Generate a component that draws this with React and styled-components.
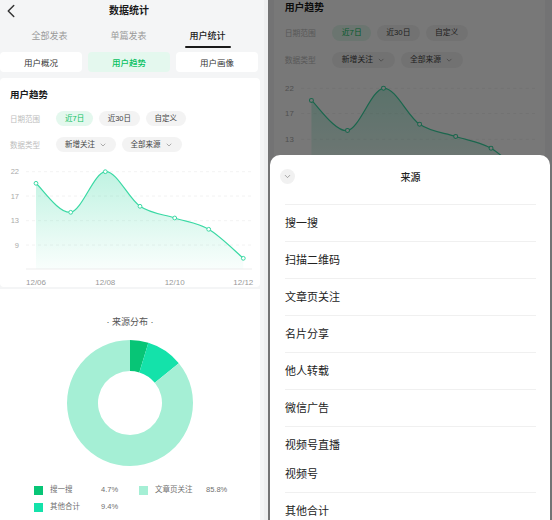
import styled, { createGlobalStyle } from 'styled-components'
import { ChevronLeft, ChevronDown } from 'lucide-react'

const GREEN = '#07c160'
const LINE = '#3ad9a4'

const GlobalStyle = createGlobalStyle`
  * { box-sizing: border-box; margin: 0; padding: 0; }
  body {
    margin: 0;
    font-family: "Liberation Sans", "Noto Sans CJK SC", sans-serif;
    background: #f4f5f6;
  }
`

const Canvas = styled.div`
  display: flex; width: 552px; height: 520px; overflow: hidden; background: #f4f5f6;
`
const LeftScreen = styled.div`width: 262px; flex: none; height: 100%; overflow: hidden;`
const Gap = styled.div`width: 6px; flex: none; border-left: 2px solid #f4f5f6; background: #eeeff0;`
const RightScreen = styled.div`position: relative; flex: 1; overflow: hidden; background: #f4f5f6;`
/* the page behind the sheet, scrolled down to the trend card */
const Scrolled = styled.div`zoom: 1.04; width: 262px; height: 166px; overflow: hidden; margin: -15px 0 0 6px;`

const Page = styled.div`width: 262px; background: #f4f5f6; color: #1a1a1a;`

const Header = styled.div`
  display: grid; grid-template-columns: 22px 1fr 26px; align-items: center; height: 22px;
  svg { display: block; color: #333; }
`
const Title = styled.h1`font-size: 10px; font-weight: 700; text-align: center; line-height: 12px;`

const Tabs = styled.div`display: grid; grid-template-columns: repeat(3, 79px); padding-left: 10px;`
const Tab = styled.div`
  display: flex; flex-direction: column; align-items: center; height: 26px; padding-top: 8px;
  font-size: 9px; line-height: 12px;
  color: ${({ $active }) => ($active ? '#1a1a1a' : '#9a9a9a')};
  font-weight: ${({ $active }) => ($active ? 500 : 400)};
  &::after {
    content: ''; width: 46px; height: 1.5px; margin-top: 4px; border-radius: 1px;
    background: ${({ $active }) => ($active ? '#1a1a1a' : 'transparent')};
  }
`

const Segments = styled.div`display: grid; grid-template-columns: repeat(3, 82px); gap: 6px; margin-top: 4px;`
const Seg = styled.div`
  height: 20px; display: flex; align-items: center; justify-content: center; border-radius: 4px;
  font-size: 8.5px; font-weight: ${({ $active }) => ($active ? 500 : 400)};
  background: ${({ $active }) => ($active ? '#e4f8ee' : '#fff')};
  color: ${({ $active }) => ($active ? GREEN : '#333')};
`

const Card = styled.div`margin: 6px 2px 0 0; background: #fff; border-radius: 4px;`
const CardHead = styled.div`padding: 11px 10px 0;`
const CardTitle = styled.h2`font-size: 9.5px; font-weight: 700; line-height: 12px;`
const Filters = styled.div`display: grid; gap: 11px; margin-top: 10px;`
const FilterRow = styled.div`display: flex; align-items: center;`
const FilterLabel = styled.span`width: 46px; flex: none; font-size: 7.5px; color: #bdbdbd;`
const Chips = styled.div`display: flex; gap: 5.5px;`
const Chip = styled.span`
  display: inline-flex; align-items: center; gap: 4px; height: 15px; padding: 0 9px;
  border-radius: 8px; font-size: 7.5px; line-height: 1;
  background: ${({ $active }) => ($active ? '#e4f8ee' : '#f3f3f3')};
  color: ${({ $active }) => ($active ? GREEN : '#444')};
  svg { color: #888; }
`
const Chart = styled.svg`display: block; margin-top: 4px;`

const PieCard = styled.div`margin: 2px 2px 0 0; background: #fff; padding-top: 27px; height: 240px;`
const PieTitle = styled.div`text-align: center; font-size: 9px; line-height: 12px; color: #555;`
const Donut = styled.svg`display: block; margin: 11px auto 0;`
const Legend = styled.div`
  display: grid; grid-template-columns: 105px 105px; row-gap: 5px; margin-top: 17px; padding-left: 34px;
`
const LegendItem = styled.div`display: flex; align-items: center; font-size: 7.5px; line-height: 12px; color: #707070;`
const Swatch = styled.span`width: 9px; height: 9px; flex: none; margin-right: 7px; background: ${({ $c }) => $c};`
const LegendName = styled.span`width: 51px; flex: none;`

const Mask = styled.div`position: absolute; inset: 0; background: rgba(0, 0, 0, 0.53);`
const Sheet = styled.div`
  position: absolute; top: 155px; left: 2px; right: 2px; bottom: 0;
  background: #fff; border-radius: 10px 10px 0 0; padding: 0 14px 0 15px;
`
const SheetHeader = styled.div`display: grid; grid-template-columns: 15px 1fr 15px; align-items: center; height: 42px;`
const CloseBtn = styled.span`
  width: 15px; height: 15px; border-radius: 50%; background: #f1f1f1; margin-left: -5px;
  display: flex; align-items: center; justify-content: center; color: #8a8a8a;
`
const SheetTitle = styled.div`text-align: center; font-size: 10px; font-weight: 500; color: #222;`
const List = styled.div`margin-top: 7px; border-top: 1px solid #f0f0f0;`
const Item = styled.div`
  display: flex; font-size: 11px; line-height: 14px; color: #222;
  height: ${({ $flush }) => ($flush ? 29 : 37)}px;
  align-items: ${({ $flush }) => ($flush ? 'flex-start' : 'center')};
  padding-top: ${({ $flush }) => ($flush ? 11 : 0)}px;
  border-bottom: ${({ $flush }) => ($flush ? 'none' : '1px solid #f0f0f0')};
`

const points = [[36, 27.3], [70.7, 56.3], [105.3, 15.7], [140, 50.3], [174.7, 62], [208.7, 73.3], [243.3, 102.3]]
const yTicks = [['22', 15.7], ['17', 40], ['13', 64.7], ['9', 89]]
const xTicks = [['12/06', 36], ['12/08', 105.3], ['12/10', 174.7], ['12/12', 243.3]]
const AXIS = 113

const smoothPath = (p) => {
  let d = `M${p[0][0]},${p[0][1]}`
  for (let i = 0; i < p.length - 1; i++) {
    const p0 = p[i - 1] || p[i]
    const p1 = p[i]
    const p2 = p[i + 1]
    const p3 = p[i + 2] || p2
    const c1 = [p1[0] + (p2[0] - p0[0]) / 6, p1[1] + (p2[1] - p0[1]) / 6]
    const c2 = [p2[0] - (p3[0] - p1[0]) / 6, p2[1] - (p3[1] - p1[1]) / 6]
    d += ` C${c1[0]},${c1[1]} ${c2[0]},${c2[1]} ${p2[0]},${p2[1]}`
  }
  return d
}

const linePath = smoothPath(points)
const areaPath = `${linePath} L${points[points.length - 1][0]},${AXIS} L${points[0][0]},${AXIS} Z`

const slices = [
  { name: '搜一搜', pct: 4.7, color: '#07c576' },
  { name: '其他合计', pct: 9.4, color: '#14e2aa' },
  { name: '文章页关注', pct: 85.8, color: '#a5efd5' },
]

const arc = (cx, cy, R, r, a0, a1) => {
  const pt = (rad, a) => [cx + rad * Math.sin(a), cy - rad * Math.cos(a)]
  const large = a1 - a0 > Math.PI ? 1 : 0
  const [x0, y0] = pt(R, a0)
  const [x1, y1] = pt(R, a1)
  const [x2, y2] = pt(r, a1)
  const [x3, y3] = pt(r, a0)
  return `M${x0} ${y0} A${R} ${R} 0 ${large} 1 ${x1} ${y1} L${x2} ${y2} A${r} ${r} 0 ${large} 0 ${x3} ${y3} Z`
}

const total = slices.reduce((s, x) => s + x.pct, 0)
let acc = 0
const donutArcs = slices.map((s) => {
  const a0 = (acc / total) * Math.PI * 2
  acc += s.pct
  const a1 = (acc / total) * Math.PI * 2
  return { ...s, d: arc(64, 64, 63, 32, a0, a1) }
})

const SOURCES = ['搜一搜', '扫描二维码', '文章页关注', '名片分享', '他人转载', '微信广告', '视频号直播', '视频号', '其他合计']

const TrendChart = ({ id }) => (
  <Chart width="260" height="131" viewBox="0 0 260 131">
    <defs>
      <linearGradient id={id} x1="0" y1="0" x2="0" y2="1">
        <stop offset="0" stopColor={LINE} stopOpacity="0.32" />
        <stop offset="1" stopColor={LINE} stopOpacity="0.03" />
      </linearGradient>
    </defs>
    {yTicks.map(([t, y]) => (
      <g key={t}>
        <line x1="26" x2="252" y1={y} y2={y} stroke="#efefef" strokeDasharray="3 3" strokeWidth="0.8" />
        <text x="19" y={y} textAnchor="end" dominantBaseline="central" fontSize="7.5" fill="#aaa">{t}</text>
      </g>
    ))}
    <path d={areaPath} fill={`url(#${id})`} />
    <line x1="26" x2="252" y1={AXIS} y2={AXIS} stroke="#e8e8e8" strokeWidth="0.8" />
    <path d={linePath} fill="none" stroke={LINE} strokeWidth="1.2" />
    {points.map(([x, y]) => (
      <circle key={x} cx={x} cy={y} r="1.9" fill="#fff" stroke={LINE} strokeWidth="1" />
    ))}
    {xTicks.map(([t, x]) => (
      <text key={t} x={x} y="129" textAnchor="middle" fontSize="8" fill="#9a9a9a">{t}</text>
    ))}
  </Chart>
)

const TrendCard = ({ id }) => (
  <Card>
    <CardHead>
      <CardTitle>用户趋势</CardTitle>
      <Filters>
        <FilterRow>
          <FilterLabel>日期范围</FilterLabel>
          <Chips>
            <Chip $active>近7日</Chip>
            <Chip>近30日</Chip>
            <Chip>自定义</Chip>
          </Chips>
        </FilterRow>
        <FilterRow>
          <FilterLabel>数据类型</FilterLabel>
          <Chips>
            <Chip>新增关注 <ChevronDown size={8} strokeWidth={2} /></Chip>
            <Chip>全部来源 <ChevronDown size={8} strokeWidth={2} /></Chip>
          </Chips>
        </FilterRow>
      </Filters>
    </CardHead>
    <TrendChart id={`fill-${id}`} />
  </Card>
)

const StatsPage = () => (
  <Page>
    <Header>
      <ChevronLeft size={22} strokeWidth={1.6} />
      <Title>数据统计</Title>
      <span />
    </Header>
    <Tabs>
      <Tab>全部发表</Tab>
      <Tab>单篇发表</Tab>
      <Tab $active>用户统计</Tab>
    </Tabs>
    <Segments>
      <Seg>用户概况</Seg>
      <Seg $active>用户趋势</Seg>
      <Seg>用户画像</Seg>
    </Segments>
    <TrendCard id="a" />
    <PieCard>
      <PieTitle>· 来源分布 ·</PieTitle>
      <Donut width="128" height="128" viewBox="0 0 128 128">
        {donutArcs.map((s) => <path key={s.name} d={s.d} fill={s.color} />)}
      </Donut>
      <Legend>
        {[slices[0], slices[2], slices[1]].map((s) => (
          <LegendItem key={s.name}>
            <Swatch $c={s.color} />
            <LegendName>{s.name}</LegendName>
            <span>{s.pct}%</span>
          </LegendItem>
        ))}
      </Legend>
    </PieCard>
  </Page>
)

const App = () => (
  <>
    <GlobalStyle />
    <Canvas>
      <LeftScreen>
        <StatsPage />
      </LeftScreen>
      <Gap />
      <RightScreen>
        <Scrolled>
          <Page>
            <TrendCard id="b" />
          </Page>
        </Scrolled>
        <Mask />
        <Sheet>
          <SheetHeader>
            <CloseBtn><ChevronDown size={9} strokeWidth={2} /></CloseBtn>
            <SheetTitle>来源</SheetTitle>
            <span />
          </SheetHeader>
          <List>
            {SOURCES.map((s) => (
              <Item key={s} $flush={s === '视频号直播'}>{s}</Item>
            ))}
          </List>
        </Sheet>
      </RightScreen>
    </Canvas>
  </>
)

export default App
